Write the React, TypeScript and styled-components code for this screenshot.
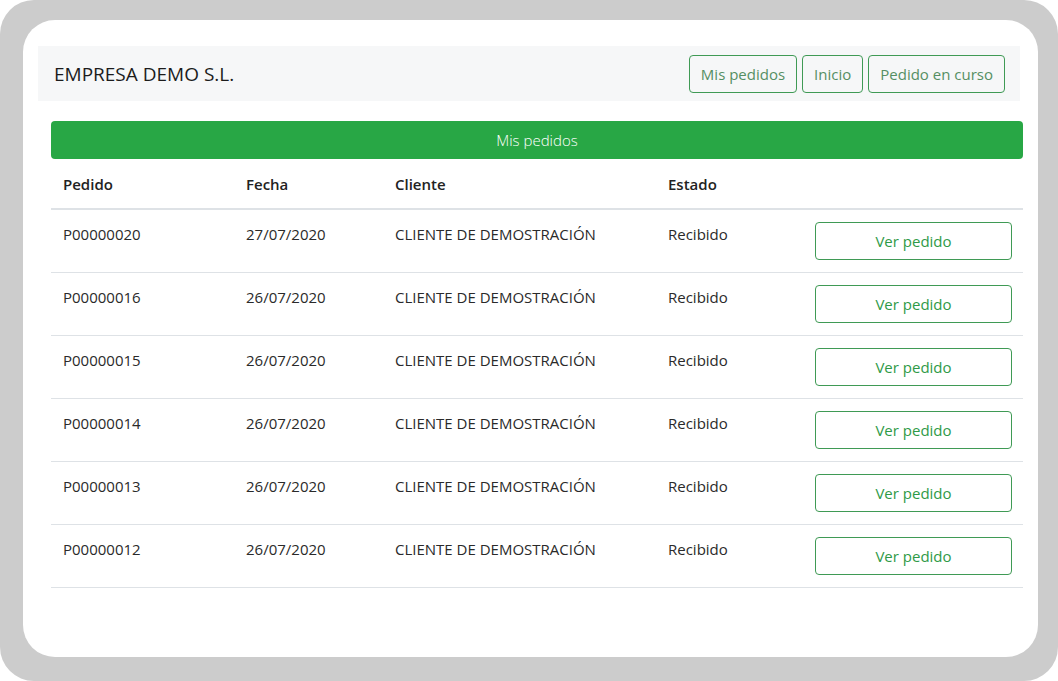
import React from 'react';
import styled, { createGlobalStyle } from 'styled-components';

const GlobalStyle = createGlobalStyle`
  html, body {
    margin: 0;
    padding: 0;
    background: #ffffff;
  }
  body {
    font-family: "Open Sans", "Noto Sans", sans-serif;
    color: #212529;
  }
`;

const Frame = styled.div`
  width: 1058px;
  height: 681px;
  box-sizing: border-box;
  background: #cccccc;
  border-radius: 34px;
  padding: 20px 20px 24px 23px;
`;

const Panel = styled.div`
  height: 100%;
  background: #ffffff;
  border-radius: 32px;
  padding: 26px 15px 0 15px;
  box-sizing: border-box;
`;

const NavBar = styled.div`
  display: flex;
  align-items: center;
  justify-content: space-between;
  height: 55px;
  margin-right: 3px;
  background: #f6f7f8;
  padding: 0 15px 0 16px;
  box-sizing: border-box;
`;

const Brand = styled.div`
  font-size: 19px;
  color: #1c1c1c;
`;

const NavButtons = styled.div`
  display: flex;
  gap: 5px;
`;

const OutlineButton = styled.button<{ $wide?: boolean }>`
  font-family: "Open Sans", "Noto Sans", sans-serif;
  height: 38px;
  box-sizing: border-box;
  padding: 0 ${p => (p.$wide ? '12px' : '11px')};
  width: ${p => (p.$wide ? '197px' : 'auto')};
  background: transparent;
  border: 1px solid #3f9a55;
  border-radius: 4px;
  color: ${p => (p.$wide ? '#2f9a47' : '#558f63')};
  font-size: 15px;
  font-weight: 400;
  cursor: pointer;
`;

const Content = styled.div`
  padding: 20px 0 0 13px;
`;

const TitleBar = styled.div`
  height: 38px;
  background: #28a745;
  border-radius: 4px;
  color: #ffffff;
  display: flex;
  align-items: center;
  justify-content: center;
  font-size: 15px;
  font-weight: 300;
`;

const Table = styled.table`
  width: 972px;
  border-collapse: collapse;
  table-layout: fixed;
  font-size: 15px;
`;

const Th = styled.th<{ $w: number }>`
  width: ${p => p.$w - 24}px;
  text-align: left;
  font-weight: 600;
  padding: 13px 12px 12px;
  line-height: 24px;
  border-bottom: 2px solid #dee2e6;
  color: #222;
`;

const Td = styled.td`
  padding: 12px;
  line-height: 24px;
  vertical-align: top;
  border-bottom: 1px solid #dee2e6;
  color: #2a2a2a;
`;

const columns = [
  { label: 'Pedido', w: 183 },
  { label: 'Fecha', w: 149 },
  { label: 'Cliente', w: 273 },
  { label: 'Estado', w: 147 },
  { label: '', w: 220 },
];

const orders = [
  ['P00000020', '27/07/2020'],
  ['P00000016', '26/07/2020'],
  ['P00000015', '26/07/2020'],
  ['P00000014', '26/07/2020'],
  ['P00000013', '26/07/2020'],
  ['P00000012', '26/07/2020'],
];

export default function App() {
  return (
    <>
      <GlobalStyle />
      <Frame>
        <Panel>
          <NavBar>
            <Brand>EMPRESA DEMO S.L.</Brand>
            <NavButtons>
              <OutlineButton>Mis pedidos</OutlineButton>
              <OutlineButton>Inicio</OutlineButton>
              <OutlineButton>Pedido en curso</OutlineButton>
            </NavButtons>
          </NavBar>
          <Content>
            <TitleBar>Mis pedidos</TitleBar>
            <Table>
              <thead>
                <tr>
                  {columns.map(c => (
                    <Th key={c.label || 'acc'} $w={c.w}>{c.label}</Th>
                  ))}
                </tr>
              </thead>
              <tbody>
                {orders.map(([id, date]) => (
                  <tr key={id}>
                    <Td>{id}</Td>
                    <Td>{date}</Td>
                    <Td>CLIENTE DE DEMOSTRACIÓN</Td>
                    <Td>Recibido</Td>
                    <Td>
                      <OutlineButton $wide>Ver pedido</OutlineButton>
                    </Td>
                  </tr>
                ))}
              </tbody>
            </Table>
          </Content>
        </Panel>
      </Frame>
    </>
  );
}
